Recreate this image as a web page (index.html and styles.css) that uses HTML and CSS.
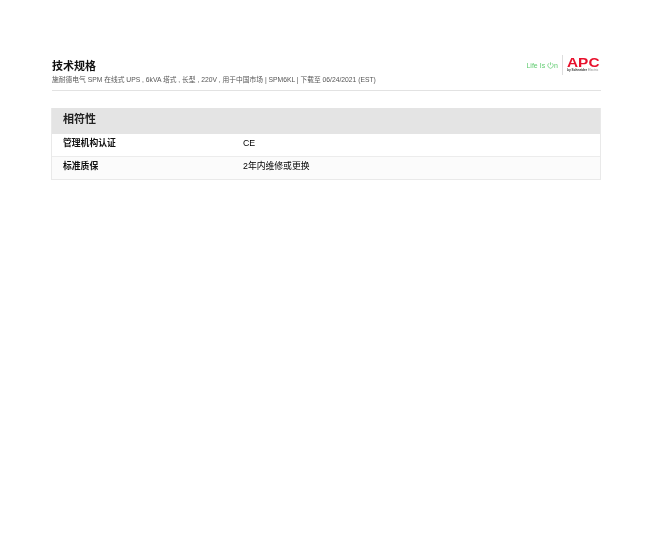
FILE: index.html
```html
<!DOCTYPE html>
<html lang="zh-CN">
<head>
<meta charset="utf-8">
<title>技术规格</title>
<link rel="stylesheet" href="styles.css">
</head>
<body>
<main class="page">
  <header class="head">
    <div class="head-text">
      <h1 class="title">技术规格</h1>
      <p class="sub">施耐德电气 SPM 在线式 UPS , 6kVA 塔式 , 长型 , 220V , 用于中国市场 | SPM6KL | 下载至 06/24/2021 (EST)</p>
    </div>
    <div class="brand">
      <span class="lio">Life Is <svg class="on" viewBox="0 0 8 8" width="7" height="7"><path d="M2.2 1.4a3.1 3.1 0 1 0 3.6 0M4 .3v3.4" fill="none" stroke="#5fcb6f" stroke-width=".8"/></svg>n</span>
      <div class="logo">
        <svg class="apc" viewBox="0 0 33 12" width="33" height="12"><text x="0" y="10.5" class="apc-text" textLength="32.5" lengthAdjust="spacingAndGlyphs">APC</text></svg>
        <span class="by"><b>by Schneider</b> Electric</span>
      </div>
    </div>
  </header>
  <section class="table">
    <h2 class="sec">相符性</h2>
    <div class="row"><div class="k">管理机构认证</div><div class="v">CE</div></div>
    <div class="row alt"><div class="k">标准质保</div><div class="v">2年内维修或更换</div></div>
  </section>
</main>
</body>
</html>
```
FILE: styles.css
```css
html, body { margin: 0; padding: 0; background: #fff; }
body { font-family: "Liberation Sans", "Noto Sans CJK SC", sans-serif; color: #222; }
.page { padding: 59px 53px 0 52px; transform: translateZ(0); }
.head { display: flex; justify-content: space-between; align-items: flex-start; height: 31px; border-bottom: 1px solid #e2e2e2; }
.title { margin: 0; font-size: 11px; line-height: 14px; font-weight: 700; color: #111; }
.sub { margin: 2px 0 0; font-size: 6.75px; line-height: 9px; color: #555; white-space: nowrap; }
.brand { display: flex; align-items: center; margin-top: -4px; height: 20px; }
.lio { font-size: 7px; color: #5fcb6f; padding-right: 4px; display: flex; align-items: center; white-space: pre; }
.logo { border-left: 1px solid #ddd; padding: 0 1px 0 4px; height: 20px; width: 33px; display: flex; flex-direction: column; align-items: flex-start; }
.apc { display: block; margin-top: 1px; }
.apc-text { font: 700 12px "Liberation Sans", sans-serif; fill: #e8112d; }
.by { font-size: 3.2px; line-height: 5px; color: #888; white-space: nowrap; }
.by b { color: #333; }
.table { margin: 17px 0 0 -1px; border: 1px solid #e9e9e9; border-top: 0; }
.sec { margin: 0; height: 26px; line-height: 23px; background: #e4e4e4; font-size: 11px; font-weight: 700; padding-left: 11px; color: #222; }
.row { display: flex; height: 22px; font-size: 8.8px; line-height: 19px; padding-left: 11px; border-bottom: 1px solid #ececec; }
.row:last-child { border-bottom: 0; }
.alt { background: #fbfbfb; }
.k { width: 180px; font-weight: 700; color: #111; }
.v { color: #000; }
```
